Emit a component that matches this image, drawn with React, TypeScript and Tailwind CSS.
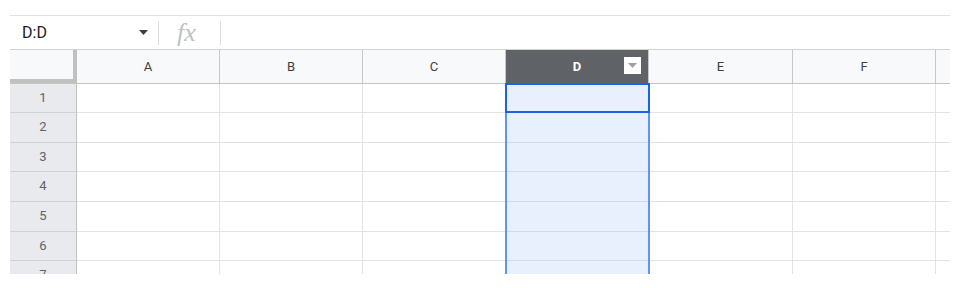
import React from "react";

const COLS = [
  { label: "A", w: "w-[143px]" },
  { label: "B", w: "w-[143px]" },
  { label: "C", w: "w-[143px]" },
  { label: "D", w: "w-[143px]" },
  { label: "E", w: "w-[144px]" },
  { label: "F", w: "w-[143px]" },
];

const ROWS = [
  { n: "1", h: "h-[29px]", last: false },
  { n: "2", h: "h-[30px]", last: false },
  { n: "3", h: "h-[29px]", last: false },
  { n: "4", h: "h-[30px]", last: false },
  { n: "5", h: "h-[30px]", last: false },
  { n: "6", h: "h-[29px]", last: false },
  { n: "7", h: "h-[13px]", last: true },
];

function FormulaBar() {
  return (
    <div className="flex h-[34px] items-center border-t border-[#e0e0e0]">
      <div className="flex w-[148px] items-center justify-between pl-[12px] pr-[10px]">
        <span className="text-[16px] text-[#202124]">D:D</span>
        <svg width="9" height="5" viewBox="0 0 9 5">
          <path d="M0 0h9L4.5 5z" fill="#3c4043" />
        </svg>
      </div>
      <div className="h-[24px] w-px bg-[#dadce0]" />
      <div className="flex w-[61px] items-center pl-[18px]">
        <span className="font-['Liberation_Serif',serif] text-[26px] italic leading-none text-[#bdc1c6]">
          fx
        </span>
      </div>
      <div className="h-[24px] w-px bg-[#dadce0]" />
    </div>
  );
}

function HeaderRow() {
  return (
    <div className="flex h-[35px] border-y border-t-[#d3d3d3] border-b-[#c4c4c4]">
      <div className="w-[67px] shrink-0 border-r-[4px] border-b-[4px] border-[#c0c0c0] bg-[#f8f9fa]" />
      {COLS.map((c) =>
        c.label === "D" ? (
          <div
            key={c.label}
            className={`${c.w} relative flex shrink-0 items-center justify-center border-r border-[#c7c7c7] bg-[#5f6368] text-[13px] font-bold text-white`}
          >
            D
            <div className="absolute right-[7px] top-[7px] flex h-[17px] w-[17px] items-center justify-center bg-white">
              <svg width="9" height="5" viewBox="0 0 9 5">
                <path d="M0 0h9L4.5 5z" fill="#9aa0a6" />
              </svg>
            </div>
          </div>
        ) : (
          <div
            key={c.label}
            className={`${c.w} flex shrink-0 items-center justify-center border-r border-[#c7c7c7] bg-[#f8f9fa] text-[13px] text-[#3c4043]`}
          >
            {c.label}
          </div>
        ),
      )}
      <div className="w-[14px] shrink-0 bg-[#f8f9fa]" />
    </div>
  );
}

function DataRow({ n, h, last }: { n: string; h: string; last: boolean }) {
  return (
    <div className={`flex ${h}`}>
      <div
        className={`w-[67px] shrink-0 overflow-hidden border-r border-r-[#c0c0c0] ${
          last ? "" : "border-b border-b-[#d0d2d5]"
        } bg-[#e8eaed] pt-[6px] text-center text-[13px] leading-[16px] text-[#5f6368]`}
      >
        {n}
      </div>
      {COLS.map((c) => (
        <div
          key={c.label}
          className={`${c.w} shrink-0 border-r ${last ? "" : "border-b"} ${
            c.label === "D"
              ? "border-[#d3dbe6] bg-[#e8f0fd]"
              : "border-[#e2e3e3] bg-white"
          }`}
        />
      ))}
      <div className={`w-[14px] shrink-0 ${last ? "" : "border-b"} border-[#e2e3e3]`} />
    </div>
  );
}

export default function App() {
  return (
    <div className="h-[288px] w-[960px] bg-white font-['Roboto','Liberation_Sans',sans-serif]">
      <div className="w-[950px] pl-[10px] pt-[15px]">
        <FormulaBar />
        <div className="relative">
          <HeaderRow />
          {ROWS.map((r) => (
            <DataRow key={r.n} n={r.n} h={r.h} last={r.last} />
          ))}
          <div className="pointer-events-none absolute left-[495px] top-[35px] h-[190px] w-[145px] border-x-2 border-[#5b96f2]" />
          <div className="pointer-events-none absolute left-[495px] top-[34px] h-[30px] w-[145px] border-2 border-[#1a62e8]" />
        </div>
      </div>
    </div>
  );
}
